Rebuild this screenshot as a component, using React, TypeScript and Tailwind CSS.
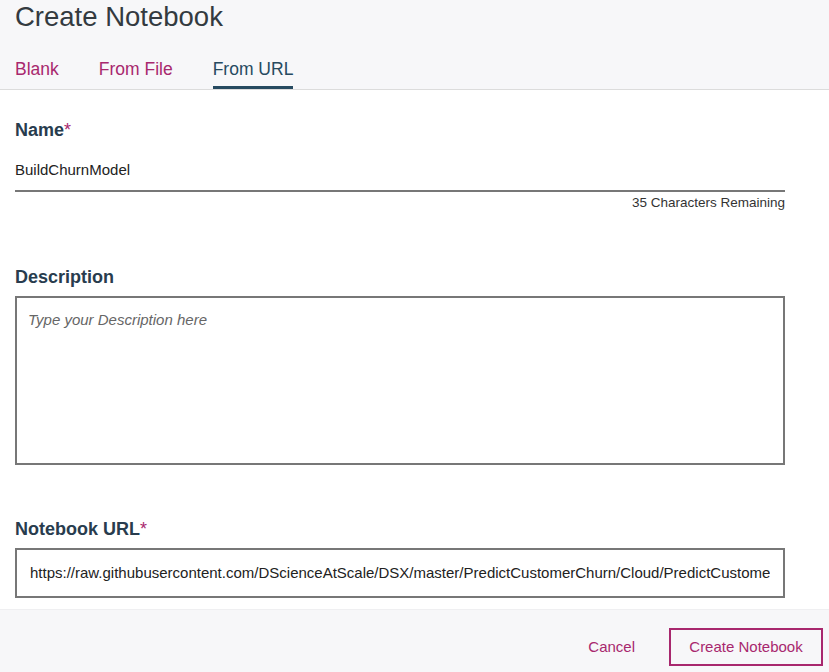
import React from "react";

const font = { fontFamily: '"Liberation Sans", Arial, Helvetica, sans-serif' };

function Label({ text, required }: { text: string; required?: boolean }) {
  return (
    <div className="text-[18px] leading-[20px] font-bold text-[#283c4e]">
      {text}
      {required && <span className="text-[#a8286e] font-normal">*</span>}
    </div>
  );
}

export default function App() {
  const tabs = ["Blank", "From File", "From URL"];
  const active = "From URL";

  return (
    <div style={font} className="w-[829px] h-[672px] flex flex-col bg-white overflow-hidden">
      {/* header */}
      <header className="bg-[#f7f7f9] border-b border-[#dcdcdc] px-[15px]">
        <h1 className="text-[27.5px] leading-[34px] font-normal text-[#333a40]">Create Notebook</h1>
        <nav className="flex gap-10 mt-[25px]">
          {tabs.map((t) => (
            <button
              key={t}
              className={`text-[17.5px] leading-[20px] pb-[7px] border-b-[3px] ${
                t === active ? "border-[#264a60] text-[#264a60]" : "border-transparent text-[#a8286e]"
              }`}
            >
              {t}
            </button>
          ))}
        </nav>
      </header>

      {/* form body */}
      <main className="flex-1 px-[15px] pt-[30px]">
        <div className="w-[770px] flex flex-col">
          <Label text="Name" required />
          <div className="mt-[20px] pb-[10px] border-b-2 border-[#777] text-[15px] leading-[20px] text-[#222]">
            BuildChurnModel
          </div>
          <div className="mt-[4px] text-right text-[13.5px] leading-[14px] text-[#333]">35 Characters Remaining</div>

          <div className="mt-[57px]">
            <Label text="Description" />
          </div>
          <div className="mt-[9px] h-[169px] border-2 border-[#777] pl-[11px] pt-[12px]">
            <div className="text-[15px] leading-[20px] italic text-[#666]">Type your Description here</div>
          </div>

          <div className="mt-[54px]">
            <Label text="Notebook URL" required />
          </div>
          <div className="mt-[9px] h-[50px] border-2 border-[#777] pl-[13px] pr-[13px] flex items-center overflow-hidden">
            <div className="text-[15px] leading-[20px] text-[#222] whitespace-nowrap overflow-hidden">
              https://raw.githubusercontent.com/DScienceAtScale/DSX/master/PredictCustomerChurn/Cloud/PredictCustomerChurn.ipynb
            </div>
          </div>
        </div>
      </main>

      {/* footer */}
      <footer className="h-[63px] bg-[#f7f7f9] border-t border-[#efeff1] flex items-start justify-end gap-[34px] pt-[18px] pr-[6px]">
        <button className="h-[38px] text-[15px] text-[#a8286e]">Cancel</button>
        <button className="h-[38px] w-[154px] border-2 border-[#a8286e] text-[15px] text-[#a8286e]">
          Create Notebook
        </button>
      </footer>
    </div>
  );
}
